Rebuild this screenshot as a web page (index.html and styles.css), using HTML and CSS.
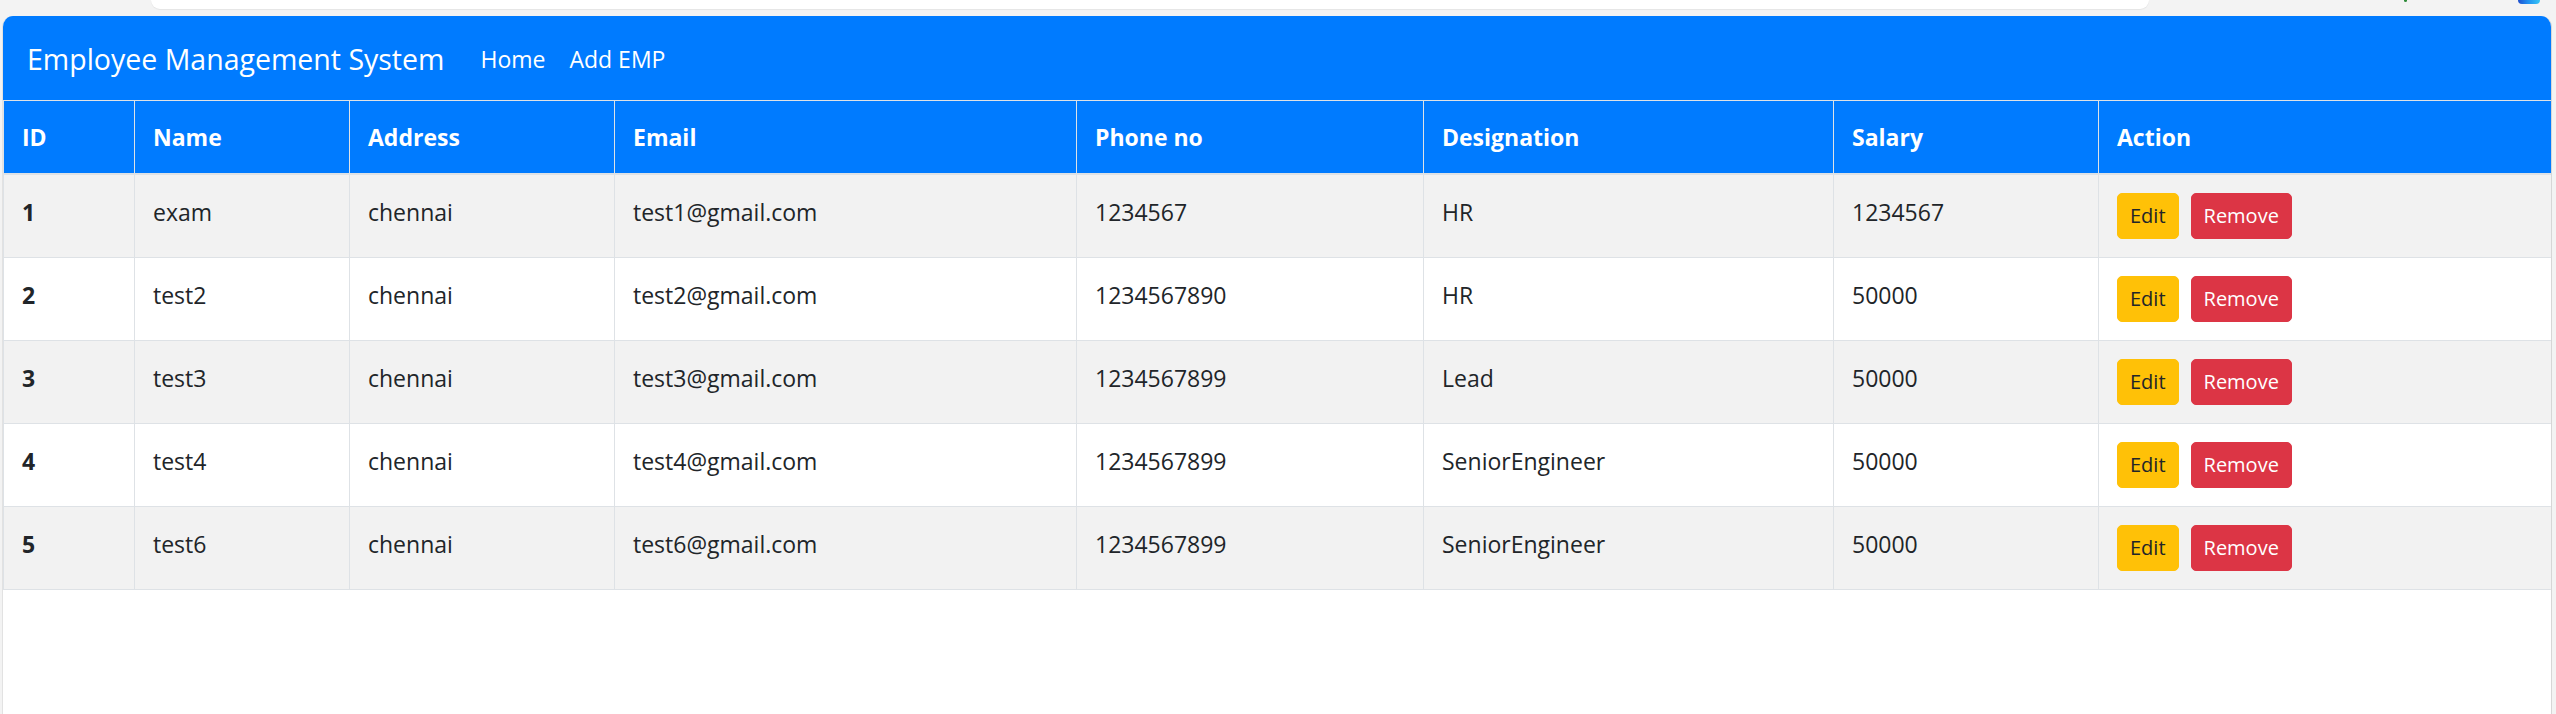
FILE: index.html
```html
<!DOCTYPE html>
<html lang="en">
<head>
<meta charset="utf-8">
<title>Employee Management System</title>
<link rel="stylesheet" href="styles.css">
</head>
<body>
<div class="chrome">
  <div class="urlbar"></div>
  <div class="chrome-icons">
    <span class="ico-green"></span>
    <span class="ico-blue"></span>
  </div>
</div>
<div class="window">
  <nav class="navbar">
    <a class="brand" href="#">Employee Management System</a>
    <ul class="nav">
      <li><a class="nav-link" href="#">Home</a></li>
      <li><a class="nav-link" href="#">Add EMP</a></li>
    </ul>
  </nav>
  <table class="table">
    <colgroup>
      <col class="c-id"><col class="c-name"><col class="c-addr"><col class="c-email">
      <col class="c-phone"><col class="c-desig"><col class="c-sal"><col class="c-act">
    </colgroup>
    <thead>
      <tr>
        <th>ID</th><th>Name</th><th>Address</th><th>Email</th>
        <th>Phone no</th><th>Designation</th><th>Salary</th><th>Action</th>
      </tr>
    </thead>
    <tbody>
      <tr>
        <th class="rowid">1</th><td>exam</td><td>chennai</td><td>test1@gmail.com</td>
        <td>1234567</td><td>HR</td><td>1234567</td>
        <td><div class="actions"><button class="btn btn-edit">Edit</button><button class="btn btn-remove">Remove</button></div></td>
      </tr>
      <tr>
        <th class="rowid">2</th><td>test2</td><td>chennai</td><td>test2@gmail.com</td>
        <td>1234567890</td><td>HR</td><td>50000</td>
        <td><div class="actions"><button class="btn btn-edit">Edit</button><button class="btn btn-remove">Remove</button></div></td>
      </tr>
      <tr>
        <th class="rowid">3</th><td>test3</td><td>chennai</td><td>test3@gmail.com</td>
        <td>1234567899</td><td>Lead</td><td>50000</td>
        <td><div class="actions"><button class="btn btn-edit">Edit</button><button class="btn btn-remove">Remove</button></div></td>
      </tr>
      <tr>
        <th class="rowid">4</th><td>test4</td><td>chennai</td><td>test4@gmail.com</td>
        <td>1234567899</td><td>SeniorEngineer</td><td>50000</td>
        <td><div class="actions"><button class="btn btn-edit">Edit</button><button class="btn btn-remove">Remove</button></div></td>
      </tr>
      <tr>
        <th class="rowid">5</th><td>test6</td><td>chennai</td><td>test6@gmail.com</td>
        <td>1234567899</td><td>SeniorEngineer</td><td>50000</td>
        <td><div class="actions"><button class="btn btn-edit">Edit</button><button class="btn btn-remove">Remove</button></div></td>
      </tr>
    </tbody>
  </table>
</div>
</body>
</html>
```

FILE: styles.css
```css
* { box-sizing: border-box; }

html, body {
  margin: 0;
  padding: 0;
  height: 714px;
  overflow: hidden;
}

body {
  background: #f3f3f3;
  font-family: "Open Sans", "Noto Sans", sans-serif;
  color: #212529;
}

.chrome {
  height: 16px;
  display: flex;
  align-items: flex-start;
  padding-left: 151px;
}

.urlbar {
  width: 1998px;
  height: 9px;
  background: #ffffff;
  border-radius: 0 0 10px 10px;
  box-shadow: 0 1px 1px rgba(0, 0, 0, 0.06);
}

.chrome-icons {
  display: flex;
  align-items: flex-start;
  margin-left: 255px;
  gap: 111px;
}

.ico-green {
  display: block;
  width: 3px;
  height: 2px;
  background: #2e8b3a;
  border-radius: 0 0 2px 2px;
}

.ico-blue {
  display: block;
  width: 22px;
  height: 4px;
  background: linear-gradient(90deg, #1f4fcf 0%, #1f8ff0 45%, #37c5f5 100%);
  border-radius: 0 0 4px 4px;
}

.window {
  margin-left: 2px;
  width: 2550px;
  height: 698px;
  background: #ffffff;
  border-left: 1px solid #e2e2e2;
  border-right: 1px solid #d6d6d6;
  border-radius: 11px 11px 0 0;
  overflow: hidden;
}

.navbar {
  height: 84px;
  background: #007bff;
  display: flex;
  align-items: center;
  padding: 0 24px;
}

.brand {
  color: #ffffff;
  text-decoration: none;
  font-size: 28.5px;
  line-height: 40px;
  margin-right: 24px;
  padding-top: 2px;
}

.nav {
  list-style: none;
  margin: 0;
  padding: 0;
  display: flex;
}

.nav-link {
  display: block;
  color: #ffffff;
  text-decoration: none;
  font-size: 23px;
  line-height: 36px;
  padding: 1px 12px 0;
}

.table {
  width: 100%;
  border-collapse: collapse;
  table-layout: fixed;
  font-size: 23px;
  line-height: 36px;
}

.c-id { width: 131px; }
.c-name { width: 215px; }
.c-addr { width: 265px; }
.c-email { width: 462px; }
.c-phone { width: 347px; }
.c-desig { width: 410px; }
.c-sal { width: 265px; }
.c-act { width: 453px; }

.table th,
.table td {
  border: 1px solid #dee2e6;
  padding: 19px 18px 16px;
  vertical-align: top;
  text-align: left;
  white-space: nowrap;
}

.table thead th {
  background: #007bff;
  color: #ffffff;
  font-weight: 700;
  border-bottom: 2px solid #dee2e6;
  padding: 18px 18px 18px;
}

.table .rowid {
  font-weight: 700;
}

.table tbody tr:nth-child(odd) {
  background: #f2f2f2;
}

.table tbody td:last-child {
  padding-top: 18px;
  padding-bottom: 18px;
}

.actions {
  display: flex;
  gap: 12px;
}

.btn {
  font-family: "Open Sans", "Noto Sans", sans-serif;
  font-size: 20px;
  line-height: 32px;
  padding: 6px 12px;
  border: 1px solid transparent;
  border-radius: 5px;
  cursor: pointer;
}

.btn-edit {
  background: #ffc107;
  border-color: #ffc107;
  color: #212529;
}

.btn-remove {
  background: #dc3545;
  border-color: #dc3545;
  color: #ffffff;
}
```
